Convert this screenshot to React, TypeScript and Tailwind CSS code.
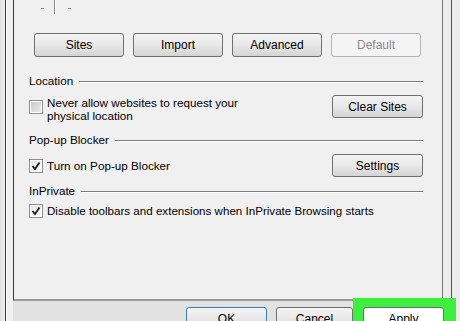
import React from 'react'

const font = { fontFamily: '"Liberation Sans", Arial, sans-serif' }

function Button({ label, disabled = false, className = '' }: { label: string; disabled?: boolean; className?: string }) {
  return (
    <div
      className={`flex items-center justify-center rounded-[3px] border text-[12px] ${
        disabled
          ? 'border-[#b5b5b5] bg-[#f4f4f4] text-[#8a8a8a]'
          : 'border-[#707070] bg-gradient-to-b from-[#f4f4f4] via-[#e8e8e8] to-[#d4d4d4] text-black'
      } ${className}`}
    >
      {label}
    </div>
  )
}

function Checkbox({ checked }: { checked: boolean }) {
  return (
    <div className="w-[14px] h-[14px] border border-[#8e8f8f] bg-white p-px shrink-0">
      <div className={`w-full h-full ${checked ? 'bg-gradient-to-br from-[#e8e8e8] to-[#fdfdfd]' : 'bg-gradient-to-br from-[#c9c9c9] to-[#ececec]'}`}>
        {checked && (
          <svg width="10" height="10" viewBox="0 0 10 10">
            <path d="M1.5 5 L4 8 L8.5 1.5" fill="none" stroke="#1f1f1f" strokeWidth="1.8" />
          </svg>
        )}
      </div>
    </div>
  )
}

function SectionHeader({ label, className = '' }: { label: string; className?: string }) {
  return (
    <div className={`flex items-center h-[16px] ${className}`}>
      <span className="text-[11.7px] text-black">{label}</span>
      <div className="flex-1 ml-[6px] border-t border-[#7a7a7a] border-b border-b-white mt-[2px]" />
    </div>
  )
}

export default function App() {
  return (
    <div className="relative flex w-[460px] h-[321px] overflow-hidden bg-[#ececec]" style={font}>
      {/* left frame */}
      <div className="w-[5px] bg-gradient-to-r from-[#dedede] to-[#f0f0f0]" />
      <div className="w-px bg-[#3a3a3a]" />
      <div className="w-[7px] bg-[#efefef] border-l border-white" />

      {/* main column */}
      <div className="w-[430px] flex flex-col">
        <div className="h-[301px] shrink-0 bg-[#f0f0f0] border-l border-[#3a3a3a] border-r border-r-[#777] border-b-2 border-b-[#999] pl-[15px] pr-[19px] flex flex-col">
          {/* slider ticks */}
          <div className="relative h-[33px] shrink-0">
            <div className="absolute left-[12px] top-[8px] w-[3px] h-px bg-[#8a8a8a]" />
            <div className="absolute left-[25px] top-0 w-px h-[14px] bg-[#8a8a8a] shadow-[1px_0_0_#ffffff]" />
            <div className="absolute left-[39px] top-[8px] w-[3px] h-px bg-[#8a8a8a]" />
          </div>

          {/* top buttons */}
          <div className="flex gap-[9px] pl-[5px]">
            <Button label="Sites" className="w-[90px] h-[24px]" />
            <Button label="Import" className="w-[90px] h-[24px]" />
            <Button label="Advanced" className="w-[90px] h-[24px]" />
            <Button label="Default" disabled className="w-[90px] h-[24px]" />
          </div>

          <SectionHeader label="Location" className="mt-[16px]" />

          <div className="flex items-start mt-[5px]">
            <div className="pt-[6px]">
              <Checkbox checked={false} />
            </div>
            <div className="ml-[4px] text-[11.7px] leading-[13px] text-black pt-[2px]">
              Never allow websites to request your
              <br />
              physical location
            </div>
            <div className="flex-1" />
            <Button label="Clear Sites" className="w-[91px] h-[23px] mt-px" />
          </div>

          <SectionHeader label="Pop-up Blocker" className="mt-[10px]" />

          <div className="flex items-center mt-[6px] h-[23px]">
            <Checkbox checked />
            <span className="ml-[4px] text-[11.7px] text-black">Turn on Pop-up Blocker</span>
            <div className="flex-1" />
            <Button label="Settings" className="w-[91px] h-[23px]" />
          </div>

          <SectionHeader label="InPrivate" className="mt-[6px]" />

          <div className="flex items-center mt-[3px]">
            <Checkbox checked />
            <span className="ml-[4px] text-[11.6px] text-black">Disable toolbars and extensions when InPrivate Browsing starts</span>
          </div>
        </div>

        {/* bottom bar */}
        <div className="flex-1 bg-[#e2e2e2] flex items-start pt-[6px] pl-[173px] gap-[9px]">
          <Button label="OK" className="w-[81px] h-[23px] !border-[#3c7fb1] shrink-0" />
          <Button label="Cancel" className="w-[77px] h-[23px] shrink-0" />
        </div>
      </div>

      {/* right frame */}
      <div className="w-[8px] bg-[#ececec]" />
      <div className="w-px bg-[#555]" />
      <div className="flex-1 bg-[#ececec]" />

      {/* highlight around Apply */}
      <div className="absolute left-[353px] top-[298px] w-[103px] h-[30px] bg-[#3ef03e] pl-[10px] pt-[9px]">
        <Button label="Apply" className="w-[81px] h-[23px] !bg-white !bg-none" />
      </div>
    </div>
  )
}
